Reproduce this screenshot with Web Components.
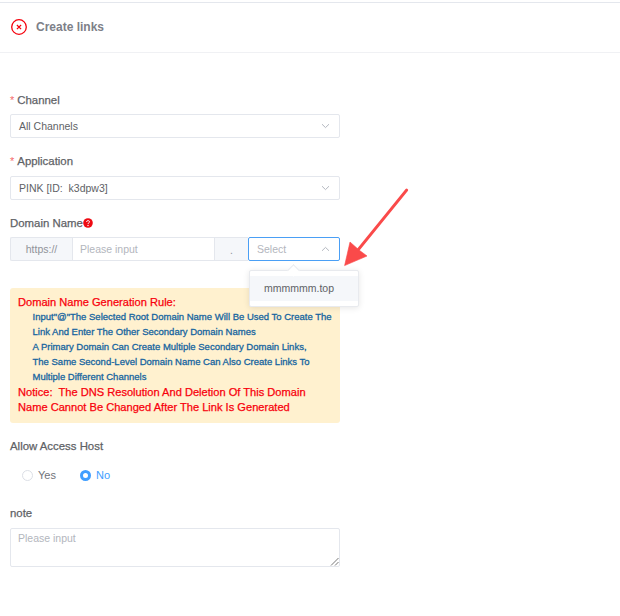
<!DOCTYPE html>
<html lang="en">
<head>
<meta charset="UTF-8">
<title>Create links</title>
<style>
    html, body { margin: 0; padding: 0; background: #fff; }
    body { font-family: "Liberation Sans", Arial, sans-serif; font-size: 10.5px; color: #606266; }
</style>
</head>
<body>
<create-links-page>
    <page-header slot="header">Create links</page-header>

    <form-item required label="Channel" style="margin-top:40px">
        <app-select value="All Channels"></app-select>
    </form-item>
    <form-item required label="Application" gap="8" style="margin-top:16px">
        <app-select value="PINK [ID:&nbsp; k3dpw3]"></app-select>
    </form-item>
    <form-item label="Domain Name" hint style="margin-top:16px">
        <domain-input></domain-input>
    </form-item>
    <rule-box style="margin-top:27px">
        <span slot="title">Domain Name Generation Rule:</span>
        <div>Input"@"The Selected Root Domain Name Will Be Used To Create The Link And Enter The Other Secondary Domain Names</div>
        <div>A Primary Domain Can Create Multiple Secondary Domain Links,</div>
        <div>The Same Second-Level Domain Name Can Also Create Links To Multiple Different Channels</div>
        <span slot="notice">Notice:&nbsp; The DNS Resolution And Deletion Of This Domain Name Cannot Be Changed After The Link Is Generated</span>
    </rule-box>
    <form-item label="Allow Access Host" style="margin-top:16px">
        <radio-pair></radio-pair>
    </form-item>
    <form-item label="note" gap="8" style="margin-top:24px">
        <note-area></note-area>
    </form-item>

    <domain-dropdown slot="over">mmmmmm.top</domain-dropdown>
    <red-arrow slot="over"></red-arrow>
</create-links-page>

<template id="page-tpl">
    <style>
        :host { display: block; position: relative; width: 620px; height: 616px; overflow: hidden; background: #fff; }
        .top { height: 2px; border-bottom: 1px solid #e4e7ed; box-sizing: content-box; }
        .form { display: flex; flex-direction: column; width: 330px; margin-left: 10px; }
    </style>
    <div class="top"></div>
    <slot name="header"></slot>
    <div class="form"><slot></slot></div>
    <slot name="over"></slot>
</template>

<template id="header-tpl">
    <style>
        :host { display: flex; align-items: center; height: 48px; padding-bottom: 1px; border-bottom: 1px solid #f0f1f4; padding-left: 11px; gap: 9px; box-sizing: content-box; }
        svg { display: block; }
        span { font-size: 12px; font-weight: 700; color: #7d8088; }
    </style>
    <svg width="16" height="16" viewBox="0 0 16 16" fill="none" stroke="#f5000c">
        <circle cx="8" cy="8" r="7.3" stroke-width="1.3"/>
        <path d="M5.9 6 10.1 10.2M10.1 6 5.9 10.2" stroke-width="1.2"/>
    </svg>
    <span><slot></slot></span>
</template>

<template id="item-tpl">
    <style>
        :host { display: block; }
        .label { display: flex; align-items: center; height: 14px; margin-bottom: 7px; font-size: 11.4px; line-height: 14px; color: #606266; -webkit-text-stroke: .25px #606266; white-space: pre; }
        .star { color: #f56c6c; -webkit-text-stroke: 0; font-size: 11px; margin-right: 3px; }
        svg { display: block; }
    </style>
    <div class="label"></div>
    <slot></slot>
</template>

<template id="select-tpl">
    <style>
        :host { display: flex; align-items: center; justify-content: space-between; box-sizing: border-box; height: 24px; padding: 0 9px 0 8px; background: #fff; border: 1px solid #e4e7ed; border-radius: 2px; font-size: 10.5px; color: #606266; }
        svg { display: block; }
    </style>
    <span id="v"></span>
    <svg width="9" height="6" viewBox="0 0 9 6" fill="none" stroke="#b4b8c0" stroke-width="1"><path d="M1 1.2 4.5 4.6 8 1.2"/></svg>
</template>

<template id="domain-tpl">
    <style>
        :host { display: flex; height: 24px; font-size: 10.5px; position: relative; }
        .add { box-sizing: border-box; display: flex; align-items: center; justify-content: center; background: #f5f7fa; border: 1px solid #e4e7ed; color: #909399; }
        .proto { width: 62px; border-right: 0; border-radius: 2px 0 0 2px; }
        .input { box-sizing: border-box; width: 143px; display: flex; align-items: center; padding-left: 7px; border: 1px solid #e4e7ed; color: #b3b6bd; }
        .dot { width: 33px; border-left: 0; border-right: 0; padding-top: 2px; }
        .sel { box-sizing: border-box; flex: 1; display: flex; align-items: center; justify-content: space-between; padding: 0 9px 0 8px; border: 1px solid #4a9ff5; border-radius: 2px; color: #b3b6bd; }
        svg { display: block; }
    </style>
    <div class="add proto">https://</div>
    <div class="input">Please input</div>
    <div class="add dot">.</div>
    <div class="sel"><span>Select</span><svg width="9" height="6" viewBox="0 0 9 6" fill="none" stroke="#b4b8c0" stroke-width="1"><path d="M1 4.8 4.5 1.4 8 4.8"/></svg></div>
</template>

<template id="rule-tpl">
    <style>
        :host { display: block; box-sizing: border-box; height: 135px; padding: 7px 8px 0; background: #fff1cf; border-radius: 3px; }
        .red { font-size: 11.1px; line-height: 15px; color: #f8000c; -webkit-text-stroke: .25px #f8000c; }
        .blue { margin: -1px 0 1px 14.5px; font-size: 9.5px; line-height: 15px; color: #17659f; -webkit-text-stroke: .3px #17659f; }
    </style>
    <div class="red"><slot name="title"></slot></div>
    <div class="blue"><slot></slot></div>
    <div class="red"><slot name="notice"></slot></div>
</template>

<template id="radio-tpl">
    <style>
        :host { display: flex; align-items: center; height: 14px; margin-top: 15px; padding-left: 12px; font-size: 11px; color: #70737a; }
        .opt { display: flex; align-items: center; gap: 5px; }
        .opt + .opt { margin-left: 24px; }
        .ring { box-sizing: border-box; width: 11px; height: 11px; border-radius: 50%; border: 1px solid #dcdfe6; background: #fff; }
        .on .ring { border: 3.5px solid #409eff; }
        .on { color: #409eff; }
    </style>
    <div class="opt"><span class="ring"></span>Yes</div>
    <div class="opt on"><span class="ring"></span>No</div>
</template>

<template id="note-tpl">
    <style>
        :host { display: block; position: relative; box-sizing: border-box; height: 39px; padding: 2px 7px; border: 1px solid #e4e7ed; border-radius: 2px; font-size: 10.5px; line-height: 14px; color: #b3b6bd; }
        svg { position: absolute; right: 0; bottom: 0; display: block; }
    </style>
    <span>Please input</span>
    <svg width="9" height="9" viewBox="0 0 9 9" fill="none" stroke="#555" stroke-width=".8"><path d="M1 8.5 8.5 1M5 8.5 8.5 5"/></svg>
</template>

<template id="dropdown-tpl">
    <style>
        :host { position: absolute; left: 249px; top: 270px; width: 110px; height: 37px; box-sizing: border-box; padding: 5px 0; background: #fff; border: 1px solid #e8eaee; border-radius: 2px; box-shadow: 0 1px 6px rgba(0,0,0,.1); font-size: 10.5px; color: #606266; }
        .item { box-sizing: border-box; display: flex; align-items: center; height: 25px; padding: 0 0 1px 14px; background: #f5f7fa; }
        .tip { position: absolute; left: 39px; top: -5px; width: 8px; height: 8px; background: #fff; border-left: 1px solid #e8eaee; border-top: 1px solid #e8eaee; transform: rotate(45deg); }
    </style>
    <div class="tip"></div>
    <div class="item"><slot></slot></div>
</template>

<template id="arrow-tpl">
    <style>
        :host { position: absolute; left: 340px; top: 185px; width: 72px; height: 84px; }
        svg { display: block; }
    </style>
    <svg width="72" height="84" viewBox="0 0 72 84">
        <path d="M66.7 5 18 65" stroke="#fa4a4a" stroke-width="2.8" stroke-linecap="round" fill="none"/>
        <path d="M4.6 80.6 10 57 19 65 27 71Z" fill="#fa4a4a" stroke="#fa4a4a" stroke-width=".6" stroke-linejoin="round"/>
    </svg>
</template>

<script>
    // helper: every element clones its own template into an open shadow root
    class TplElement extends HTMLElement {
        constructor(id) {
            super();
            const shadowRoot = this.attachShadow({ mode: 'open' });
            shadowRoot.appendChild(document.getElementById(id).content.cloneNode(true));
        }
    }

    class CreateLinksPage extends TplElement { constructor() { super('page-tpl'); } }
    class PageHeader extends TplElement { constructor() { super('header-tpl'); } }
    class DomainInput extends TplElement { constructor() { super('domain-tpl'); } }
    class RuleBox extends TplElement { constructor() { super('rule-tpl'); } }
    class RadioPair extends TplElement { constructor() { super('radio-tpl'); } }
    class NoteArea extends TplElement { constructor() { super('note-tpl'); } }
    class DomainDropdown extends TplElement { constructor() { super('dropdown-tpl'); } }
    class RedArrow extends TplElement { constructor() { super('arrow-tpl'); } }

    class FormItem extends TplElement {
        constructor() { super('item-tpl'); }
        connectedCallback() {
            const label = this.shadowRoot.querySelector('.label');
            let html = '';
            if (this.hasAttribute('required')) html += '<span class="star">*</span>';
            html += '<span>' + this.getAttribute('label') + '</span>';
            if (this.hasAttribute('hint')) {
                html += '<svg width="10" height="10" viewBox="0 0 10 10"><circle cx="5" cy="5" r="4.8" fill="#ee0a12"/><path d="M3.5 3.9C3.6 2.2 6.5 2.2 6.5 3.8 6.5 4.9 5 4.9 5 6" fill="none" stroke="#fff" stroke-width="1"/><circle cx="5" cy="7.5" r=".7" fill="#fff"/></svg>';
            }
            label.innerHTML = html;
            if (this.hasAttribute('gap')) label.style.marginBottom = this.getAttribute('gap') + 'px';
        }
    }

    class AppSelect extends TplElement {
        constructor() { super('select-tpl'); }
        connectedCallback() {
            this.shadowRoot.getElementById('v').textContent = this.getAttribute('value');
        }
    }

    customElements.define('create-links-page', CreateLinksPage);
    customElements.define('page-header', PageHeader);
    customElements.define('form-item', FormItem);
    customElements.define('app-select', AppSelect);
    customElements.define('domain-input', DomainInput);
    customElements.define('rule-box', RuleBox);
    customElements.define('radio-pair', RadioPair);
    customElements.define('note-area', NoteArea);
    customElements.define('domain-dropdown', DomainDropdown);
    customElements.define('red-arrow', RedArrow);
</script>
</body>
</html>
